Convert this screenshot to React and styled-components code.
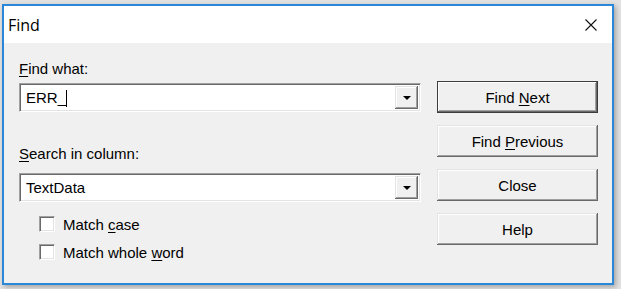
import React from 'react';
import styled, { createGlobalStyle } from 'styled-components';

const Global = createGlobalStyle`
  html, body { margin: 0; padding: 0; }
  body {
    background: #e2e2e2;
    width: 621px;
    height: 289px;
    overflow: hidden;
    font-family: "Liberation Sans", Arial, sans-serif;
    color: #000;
  }
`;

const Window = styled.div`
  margin: 4px 0 0 2px;
  width: 612px;
  height: 281px;
  box-sizing: border-box;
  border: 2px solid #2a88d6;
  background: #f0f0f0;
  display: flex;
  flex-direction: column;
  box-shadow: 2px 2px 5px rgba(0, 0, 0, 0.28);
`;

const TitleBar = styled.div`
  height: 37px;
  flex: none;
  background: #fff;
  display: flex;
  align-items: center;
  justify-content: space-between;
  padding-left: 4px;
`;

const Title = styled.span`
  font-size: 16px;
  font-family: "Open Sans", "Liberation Sans", sans-serif;
`;

const CloseBox = styled.div`
  width: 42px;
  height: 37px;
  display: flex;
  align-items: center;
  justify-content: center;
`;

const Body = styled.div`
  flex: 1;
  display: flex;
  gap: 16px;
  padding: 0 14px 0 15px;
`;

const LeftCol = styled.div`
  width: 402px;
  padding-top: 17px;
  display: flex;
  flex-direction: column;
`;

const Label = styled.div`
  font-size: 15px;
  line-height: 18px;
  height: 18px;
  margin-top: ${(p) => p.$mt || 0}px;
  margin-bottom: ${(p) => p.$mb || 5}px;
`;

const Acc = styled.span`
  text-decoration: underline;
  text-underline-offset: 2px;
  text-decoration-thickness: 1px;
`;

const Combo = styled.div`
  height: 29px;
  box-sizing: border-box;
  background: #fff;
  border-top: 1px solid #a0a0a0;
  border-left: 1px solid #a0a0a0;
  border-bottom: 1px solid #fff;
  border-right: 1px solid #fff;
  box-shadow: inset 1px 1px #696969, inset -1px -1px #e3e3e3;
  display: flex;
  align-items: center;
  padding: 2px 2px 2px 6px;
`;

const ComboText = styled.span`
  flex: 1;
  font-size: 15px;
  line-height: 18px;
  display: flex;
  align-items: center;
`;

const Caret = styled.span`
  display: inline-block;
  width: 1px;
  height: 17px;
  background: #000;
  margin-left: 0;
  align-self: flex-end;
  margin-bottom: 0px;
`;

const DropBtn = styled.div`
  width: 23px;
  height: 100%;
  box-sizing: border-box;
  background: #f0f0f0;
  box-shadow: inset -1px -1px #696969, inset 1px 1px #e3e3e3,
    inset -2px -2px #a0a0a0, inset 2px 2px #fff;
  display: flex;
  align-items: center;
  justify-content: center;
`;

const Checks = styled.div`
  margin-top: 14px;
  margin-left: 20px;
  display: flex;
  flex-direction: column;
  gap: 12px;
`;

const CheckRow = styled.label`
  display: flex;
  align-items: center;
  height: 16px;
  gap: 8px;
  font-size: 15px;
`;

const Box = styled.span`
  width: 16px;
  height: 16px;
  box-sizing: border-box;
  background: #fff;
  border-top: 1px solid #a0a0a0;
  border-left: 1px solid #a0a0a0;
  border-bottom: 1px solid #fff;
  border-right: 1px solid #fff;
  box-shadow: inset 1px 1px #696969, inset -1px -1px #e3e3e3;
`;

const RightCol = styled.div`
  width: 161px;
  padding-top: 38px;
  display: flex;
  flex-direction: column;
  gap: 12px;
`;

const Button = styled.div`
  height: 32px;
  box-sizing: border-box;
  background: #f0f0f0;
  display: flex;
  align-items: center;
  justify-content: center;
  font-size: 15px;
  border: ${(p) => (p.$default ? '1px solid #3c3c3c' : 'none')};
  box-shadow: inset -1px -1px #696969, inset 1px 1px #e3e3e3,
    inset -2px -2px #a0a0a0, inset 2px 2px #fff;
`;

const ButtonDefault = styled(Button)`
  box-shadow: inset -1px -1px #696969, inset 1px 1px #fff,
    inset -2px -2px #a0a0a0;
`;

function DownArrow() {
  return (
    <svg width="8" height="4" viewBox="0 0 8 4">
      <path d="M0 0 H8 L4 4 Z" fill="#000" />
    </svg>
  );
}

function CloseIcon() {
  return (
    <svg width="12" height="12" viewBox="0 0 12 12">
      <path d="M0.5 0.5 L11.5 11.5 M11.5 0.5 L0.5 11.5" stroke="#111" strokeWidth="1.1" fill="none" />
    </svg>
  );
}

export default function App() {
  return (
    <>
      <Global />
      <Window>
        <TitleBar>
          <Title>Find</Title>
          <CloseBox>
            <CloseIcon />
          </CloseBox>
        </TitleBar>
        <Body>
          <LeftCol>
            <Label>
              <Acc>F</Acc>ind what:
            </Label>
            <Combo>
              <ComboText>
                ERR_<Caret />
              </ComboText>
              <DropBtn>
                <DownArrow />
              </DropBtn>
            </Combo>
            <Label $mt={33} $mb={10}>
              <Acc>S</Acc>earch in column:
            </Label>
            <Combo>
              <ComboText>TextData</ComboText>
              <DropBtn>
                <DownArrow />
              </DropBtn>
            </Combo>
            <Checks>
              <CheckRow>
                <Box />
                <span>
                  Match <Acc>c</Acc>ase
                </span>
              </CheckRow>
              <CheckRow>
                <Box />
                <span>
                  Match whole <Acc>w</Acc>ord
                </span>
              </CheckRow>
            </Checks>
          </LeftCol>
          <RightCol>
            <ButtonDefault $default>
              Find&nbsp;<Acc>N</Acc>ext
            </ButtonDefault>
            <Button>
              Find&nbsp;<Acc>P</Acc>revious
            </Button>
            <Button>Close</Button>
            <Button>Help</Button>
          </RightCol>
        </Body>
      </Window>
    </>
  );
}
